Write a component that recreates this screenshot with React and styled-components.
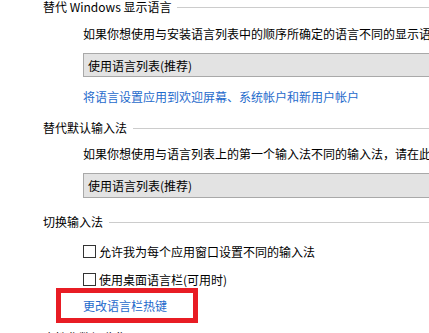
import React from 'react'
import styled, { createGlobalStyle } from 'styled-components'

const GlobalStyle = createGlobalStyle`
  html, body {
    margin: 0;
    padding: 0;
    background: #ffffff;
    overflow: hidden;
  }
  body {
    font-family: "Noto Sans CJK SC", "Noto Sans", sans-serif;
    font-size: 12px;
    color: #000;
  }
`

const Page = styled.div`
  width: 429px;
  height: 333px;
  overflow: hidden;
  padding-left: 43px;
  box-sizing: border-box;
`

const Heading = styled.div`
  display: flex;
  align-items: center;
  gap: 6px;
  height: 16px;
  line-height: 16px;
  margin-top: ${p => p.$top}px;
  white-space: nowrap;
  &::after {
    content: '';
    flex: 1;
    height: 1px;
    background: #cccccc;
  }
`

const Body = styled.div`
  padding-left: 40px;
`

const Desc = styled.div`
  margin-top: ${p => p.$top}px;
  line-height: 16px;
  white-space: nowrap;
`

const Select = styled.div`
  margin-top: 11px;
  width: 400px;
  height: ${p => p.$h}px;
  box-sizing: border-box;
  border: 1px solid #a9a9a9;
  background: #e3e3e3;
  padding-left: 4px;
  display: flex;
  align-items: center;
  white-space: nowrap;
`

const Link = styled.a`
  display: block;
  margin-top: ${p => p.$top || 0}px;
  line-height: 16px;
  color: #1f6bcc;
  text-decoration: none;
  white-space: nowrap;
  cursor: pointer;
`

const CheckRow = styled.label`
  display: flex;
  align-items: center;
  gap: 3px;
  margin-top: ${p => p.$top}px;
  height: 16px;
  white-space: nowrap;
`

const Box = styled.span`
  width: 13px;
  height: 13px;
  box-sizing: border-box;
  border: 1px solid #333;
  background: #fff;
  flex-shrink: 0;
`

const Highlight = styled.div`
  margin-top: 1px;
  margin-left: -27px;
  width: 142px;
  height: 35px;
  box-sizing: border-box;
  border: 5px solid #e81c24;
  padding-left: 22px;
  display: flex;
  align-items: center;
`

export default function App() {
  return (
    <>
      <GlobalStyle />
      <Page>
        <Heading $top={-1}>替代 Windows 显示语言</Heading>
        <Body>
          <Desc $top={11}>如果你想使用与安装语言列表中的顺序所确定的语言不同的显示语言，请在此处选择</Desc>
          <Select $h={24}>使用语言列表(推荐)</Select>
          <Link $top={12}>将语言设置应用到欢迎屏幕、系统帐户和新用户帐户</Link>
        </Body>

        <Heading $top={15}>替代默认输入法</Heading>
        <Body>
          <Desc $top={10}>如果你想使用与语言列表上的第一个输入法不同的输入法，请在此处选择</Desc>
          <Select $h={25}>使用语言列表(推荐)</Select>
        </Body>

        <Heading $top={16}>切换输入法</Heading>
        <Body>
          <CheckRow $top={13}>
            <Box />
            允许我为每个应用窗口设置不同的输入法
          </CheckRow>
          <CheckRow $top={12}>
            <Box />
            使用桌面语言栏(可用时)
          </CheckRow>
          <Highlight>
            <Link>更改语言栏热键</Link>
          </Highlight>
        </Body>

        <Heading $top={7}>个性化数据收集</Heading>
      </Page>
    </>
  )
}
